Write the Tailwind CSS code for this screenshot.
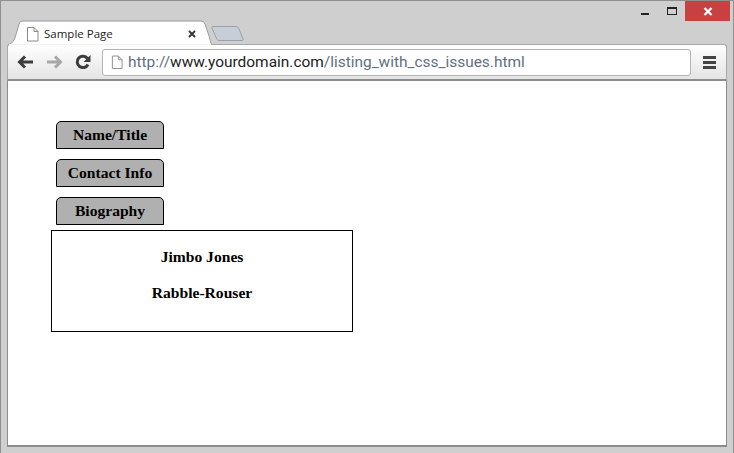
<!DOCTYPE html>
<html lang="en">
<head>
    <meta charset="UTF-8">
    <title>Sample Page</title>
    <script src="https://cdn.jsdelivr.net/npm/@tailwindcss/browser@4"></script>
</head>
<body class="w-[734px] h-[453px] overflow-hidden bg-[#cfcfcf]">
    <div class="w-[734px] h-[453px] flex flex-col border border-[#8f8f8f] border-b-0 px-[6px] pb-[6px]">
        <!-- title bar -->
        <div class="h-[20px] flex justify-end items-start shrink-0 -mr-[3px]">
            <div class="w-[28px] h-[20px] flex items-center justify-center"><div class="w-[8px] h-[2px] mt-[6px] bg-[#222]"></div></div>
            <div class="w-[26px] h-[20px] flex items-center justify-center"><div class="w-[10px] h-[8px] border border-[#222] border-t-2 -mt-[1px]"></div></div>
            <div class="w-[45px] h-[20px] bg-[#c84040] flex items-center justify-center">
                <svg width="10" height="9" viewBox="0 0 10 9"><path d="M1.500 1 L8.500 8 M8.500 1 L1.500 8" stroke="#fff" stroke-width="2.200"/></svg>
            </div>
        </div>
        <!-- tab strip -->
        <div class="h-[24px] flex items-end shrink-0 relative z-10 -mb-[1px]">
            <svg class="ml-[1px]" width="204" height="25" viewBox="0 0 204 25">
                <path d="M0 25 C6 23 7 18 9 11 L11 4 C12 1.500 13 1 16 1 L192 1 C195 1 196 2 197 4 L201 16 C202 20 203 24 204 25 Z" fill="#ffffff" stroke="#9a9a9a"/>
                <path d="M1 25 L203 25" stroke="#f0f0f0" stroke-width="2"/>
            </svg>
            <svg class="-ml-[2px] mb-[3px]" width="36" height="17" viewBox="0 0 36 17">
                <path d="M3 1.500 L25 1.500 C27 1.500 28 2 29 4 L33 14 C33.500 15 33 15.500 32 15.500 L10 15.500 C8 15.500 7 15 6.500 13.500 L2 3 C1.700 2 2 1.500 3 1.500 Z" fill="#c6ced8" stroke="#9aa0a8"/>
            </svg>
            <div class="absolute left-[19px] top-[5px] flex items-center w-[170px]">
                <svg width="13" height="15" viewBox="0 0 13 15"><path d="M1.500 .5 H8 L12 4.500 V14 H1.500 Z M8 .5 V4.500 H12" fill="#fff" stroke="#8a8a8a"/></svg>
                <span class="ml-[5px] text-[11.500px] leading-[16px] text-[#222] font-['Open_Sans',sans-serif]">Sample Page</span>
                <svg class="ml-auto" width="8" height="8" viewBox="0 0 8 8"><path d="M1 1 L7 7 M7 1 L1 7" stroke="#333" stroke-width="1.800"/></svg>
            </div>
        </div>
        <!-- toolbar -->
        <div class="h-[37px] shrink-0 flex items-center rounded-t-[3px] bg-gradient-to-b from-[#ffffff] to-[#e4e4e4] border-x border-t border-[#a8a8a8] border-b-2 border-b-[#8c8c8c] pl-[9px] pr-[10px]">
            <svg width="17" height="14" viewBox="0 0 17 14"><path d="M16 7 H4 M8 1.500 L2.500 7 L8 12.500" fill="none" stroke="#3c3c3c" stroke-width="3"/></svg>
            <svg class="ml-[12px]" width="17" height="14" viewBox="0 0 17 14"><path d="M1 7 H13 M9 1.500 L14.500 7 L9 12.500" fill="none" stroke="#a8a8a8" stroke-width="3"/></svg>
            <svg class="ml-[12px]" width="16" height="16" viewBox="0 0 16 16"><path d="M13 10.500 A5.700 5.700 0 1 1 12.500 4.500" fill="none" stroke="#3c3c3c" stroke-width="3"/><path d="M15.500 1 V8 H8.500 Z" fill="#3c3c3c"/></svg>
            <div class="ml-[11px] w-[589px] h-[27px] bg-white border border-[#b4b4b4] rounded-[3px] flex items-center pl-[8px]">
                <svg width="12" height="15" viewBox="0 0 13 15"><path d="M1.500 .5 H8 L12 4.500 V14 H1.500 Z M8 .5 V4.500 H12" fill="#fff" stroke="#8a8a8a"/></svg>
                <span class="ml-[5px] text-[15.450px] leading-[20px] whitespace-nowrap text-[#5f6f80] font-['Roboto',sans-serif]">http://<span class="text-[#1c1c1c]">www.yourdomain.com</span>/listing_with_css_issues.html</span>
            </div>
            <div class="ml-auto flex flex-col gap-[2px] w-[13px]">
                <div class="h-[3px] bg-[#444]"></div>
                <div class="h-[3px] bg-[#444]"></div>
                <div class="h-[3px] bg-[#444]"></div>
            </div>
        </div>
        <!-- page -->
        <div class="flex-1 bg-white border-x border-b-2 border-[#8c8c8c] pl-[43px] pt-[40px] font-['Liberation_Serif',serif] text-black">
            <div class="flex flex-col gap-[10px] w-[108px] ml-[5px]">
                <div class="h-[28px] bg-[#b0b0b0] border border-black rounded-t-[5px] text-center font-bold text-[15.600px] leading-[26px]">Name/Title</div>
                <div class="h-[28px] bg-[#b0b0b0] border border-black rounded-t-[5px] text-center font-bold text-[15.600px] leading-[26px]">Contact Info</div>
                <div class="h-[28px] bg-[#b0b0b0] border border-black rounded-t-[5px] text-center font-bold text-[15.600px] leading-[26px]">Biography</div>
            </div>
            <div class="mt-[5px] w-[302px] h-[102px] border border-black flex flex-col items-center pt-[17px] gap-[18px] font-bold text-[15.600px] leading-[18px]">
                <p>Jimbo Jones</p>
                <p>Rabble-Rouser</p>
            </div>
        </div>
    </div>
</body>
</html>
